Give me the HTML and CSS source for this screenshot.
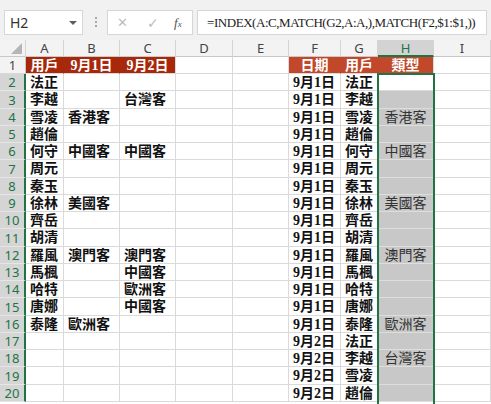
FILE: index.html
```html
<!DOCTYPE html>
<html lang="zh-Hant">
<head>
<meta charset="utf-8">
<title>Sheet</title>
<link rel="stylesheet" href="styles.css">
</head>
<body>
<div class="app">
  <div class="fbar">
    <div class="namebox"><span class="ref">H2</span><span class="dd"></span></div>
    <div class="grip"><i></i><i></i><i></i></div>
    <div class="fnbox"><span class="fx-x">✕</span><span class="fx-ok">✓</span><span class="fx"><i>f</i><span class="sub">x</span></span></div>
    <div class="formula">=INDEX(A:C,MATCH(G2,A:A,),MATCH(F2,$1:$1,))</div>
  </div>
  <div class="sheet">
    <div class="ch corner"><svg width="11" height="11" viewBox="0 0 11 11"><polygon points="11,0 11,11 0,11" fill="#b5b5b5"/></svg></div>
    <div class="ch">A</div><div class="ch">B</div><div class="ch">C</div><div class="ch">D</div><div class="ch">E</div><div class="ch">F</div><div class="ch">G</div><div class="ch sel">H</div><div class="ch">I</div>

    <div class="rh">1</div>
    <div class="c hl">用戶</div><div class="c hl">9月1日</div><div class="c hl end">9月2日</div><div class="c"></div><div class="c"></div>
    <div class="c hr">日期</div><div class="c hr">用戶</div><div class="c hr end">類型</div><div class="c"></div>

    <div class="rh s">2</div>
    <div class="c">法正</div><div class="c"></div><div class="c"></div><div class="c"></div><div class="c"></div>
    <div class="c">9月1日</div><div class="c">法正</div><div class="c act"></div><div class="c"></div>

    <div class="rh s">3</div>
    <div class="c">李越</div><div class="c"></div><div class="c">台灣客</div><div class="c"></div><div class="c"></div>
    <div class="c">9月1日</div><div class="c">李越</div><div class="c g"></div><div class="c"></div>

    <div class="rh s">4</div>
    <div class="c">雪凌</div><div class="c">香港客</div><div class="c"></div><div class="c"></div><div class="c"></div>
    <div class="c">9月1日</div><div class="c">雪凌</div><div class="c g">香港客</div><div class="c"></div>

    <div class="rh s">5</div>
    <div class="c">趙倫</div><div class="c"></div><div class="c"></div><div class="c"></div><div class="c"></div>
    <div class="c">9月1日</div><div class="c">趙倫</div><div class="c g"></div><div class="c"></div>

    <div class="rh s">6</div>
    <div class="c">何守</div><div class="c">中國客</div><div class="c">中國客</div><div class="c"></div><div class="c"></div>
    <div class="c">9月1日</div><div class="c">何守</div><div class="c g">中國客</div><div class="c"></div>

    <div class="rh s">7</div>
    <div class="c">周元</div><div class="c"></div><div class="c"></div><div class="c"></div><div class="c"></div>
    <div class="c">9月1日</div><div class="c">周元</div><div class="c g"></div><div class="c"></div>

    <div class="rh s">8</div>
    <div class="c">秦玉</div><div class="c"></div><div class="c"></div><div class="c"></div><div class="c"></div>
    <div class="c">9月1日</div><div class="c">秦玉</div><div class="c g"></div><div class="c"></div>

    <div class="rh s">9</div>
    <div class="c">徐林</div><div class="c">美國客</div><div class="c"></div><div class="c"></div><div class="c"></div>
    <div class="c">9月1日</div><div class="c">徐林</div><div class="c g">美國客</div><div class="c"></div>

    <div class="rh s">10</div>
    <div class="c">齊岳</div><div class="c"></div><div class="c"></div><div class="c"></div><div class="c"></div>
    <div class="c">9月1日</div><div class="c">齊岳</div><div class="c g"></div><div class="c"></div>

    <div class="rh s">11</div>
    <div class="c">胡清</div><div class="c"></div><div class="c"></div><div class="c"></div><div class="c"></div>
    <div class="c">9月1日</div><div class="c">胡清</div><div class="c g"></div><div class="c"></div>

    <div class="rh s">12</div>
    <div class="c">羅風</div><div class="c">澳門客</div><div class="c">澳門客</div><div class="c"></div><div class="c"></div>
    <div class="c">9月1日</div><div class="c">羅風</div><div class="c g">澳門客</div><div class="c"></div>

    <div class="rh s">13</div>
    <div class="c">馬楓</div><div class="c"></div><div class="c">中國客</div><div class="c"></div><div class="c"></div>
    <div class="c">9月1日</div><div class="c">馬楓</div><div class="c g"></div><div class="c"></div>

    <div class="rh s">14</div>
    <div class="c">哈特</div><div class="c"></div><div class="c">歐洲客</div><div class="c"></div><div class="c"></div>
    <div class="c">9月1日</div><div class="c">哈特</div><div class="c g"></div><div class="c"></div>

    <div class="rh s">15</div>
    <div class="c">唐娜</div><div class="c"></div><div class="c">中國客</div><div class="c"></div><div class="c"></div>
    <div class="c">9月1日</div><div class="c">唐娜</div><div class="c g"></div><div class="c"></div>

    <div class="rh s">16</div>
    <div class="c">泰隆</div><div class="c">歐洲客</div><div class="c"></div><div class="c"></div><div class="c"></div>
    <div class="c">9月1日</div><div class="c">泰隆</div><div class="c g">歐洲客</div><div class="c"></div>

    <div class="rh s">17</div>
    <div class="c"></div><div class="c"></div><div class="c"></div><div class="c"></div><div class="c"></div>
    <div class="c">9月2日</div><div class="c">法正</div><div class="c g"></div><div class="c"></div>

    <div class="rh s">18</div>
    <div class="c"></div><div class="c"></div><div class="c"></div><div class="c"></div><div class="c"></div>
    <div class="c">9月2日</div><div class="c">李越</div><div class="c g">台灣客</div><div class="c"></div>

    <div class="rh s">19</div>
    <div class="c"></div><div class="c"></div><div class="c"></div><div class="c"></div><div class="c"></div>
    <div class="c">9月2日</div><div class="c">雪凌</div><div class="c g"></div><div class="c"></div>

    <div class="rh s">20</div>
    <div class="c"></div><div class="c"></div><div class="c"></div><div class="c"></div><div class="c"></div>
    <div class="c">9月2日</div><div class="c">趙倫</div><div class="c g"></div><div class="c"></div>

    <div class="selection"></div>
  </div>
</div>
</body>
</html>
```

FILE: styles.css
```css
html, body {
  margin: 0;
  padding: 0;
  background: #ffffff;
  overflow: hidden;
}
body {
  width: 491px;
  height: 404px;
}
.app {
  width: 491px;
  height: 404px;
  overflow: hidden;
}

/* formula bar */
.fbar {
  display: flex;
  align-items: flex-start;
  height: 40px;
  box-sizing: border-box;
  padding: 10px 0 0 4px;
  background: #f1f1f1;
}
.namebox {
  width: 79px;
  height: 25px;
  box-sizing: border-box;
  background: #fff;
  border: 1px solid #d6d6d6;
  display: flex;
  align-items: center;
  justify-content: space-between;
  padding: 0 3px 0 5px;
  font: 14px "Noto Sans", sans-serif;
  color: #333;
}
.dd {
  width: 0;
  height: 0;
  border-left: 4px solid transparent;
  border-right: 4px solid transparent;
  border-top: 4px solid #5f5f5f;
  margin-right: 2px;
}
.grip {
  display: flex;
  flex-direction: column;
  gap: 2px;
  margin: 7px 10px 0 12px;
}
.grip i {
  display: block;
  width: 2px;
  height: 2px;
  background: #a8a8a8;
}
.fnbox {
  width: 86px;
  height: 25px;
  box-sizing: border-box;
  background: #fff;
  border: 1px solid #d6d6d6;
  display: flex;
  align-items: center;
  padding-left: 9px;
  font-family: "DejaVu Sans", sans-serif;
  color: #bdbdbd;
}
.fx-x {
  font-size: 13px;
  width: 30px;
}
.fx-ok {
  font-size: 14px;
  width: 27px;
}
.fx {
  font: italic 13px "Liberation Serif", serif;
  color: #505050;
}
.fx .sub {
  font-size: 9px;
}
.formula {
  margin-left: 4px;
  width: 290px;
  height: 25px;
  box-sizing: border-box;
  background: #fff;
  border: 1px solid #d6d6d6;
  padding-left: 9px;
  font: 13px/23px "Liberation Serif", serif;
  letter-spacing: -0.45px;
  color: #222;
  white-space: nowrap;
  overflow: hidden;
}

/* grid */
.sheet {
  position: relative;
  display: grid;
  grid-template-columns: 26px 38px 56px 56px 57px 56px 52px 37px 56px 57px;
  grid-template-rows: 17px repeat(5, 17px 17px 18px 17px);
}
.ch, .rh, .c {
  box-sizing: border-box;
  display: flex;
  align-items: center;
  overflow: hidden;
  white-space: nowrap;
}
.ch {
  justify-content: center;
  background: #f3f3f3;
  border-right: 1px solid #d4d4d4;
  border-bottom: 1px solid #c8c8c8;
  font: 13px "Noto Sans", sans-serif;
  color: #444;
}
.ch.corner {
  justify-content: flex-end;
  align-items: flex-end;
  padding: 0 3px 2px 0;
}
.ch.corner svg {
  display: block;
}
.ch.sel {
  background: #d3d3d3;
  color: #217346;
  border-bottom: 2px solid #217346;
}
.rh {
  justify-content: center;
  background: #f3f3f3;
  border-right: 1px solid #c8c8c8;
  border-bottom: 1px solid #d9d9d9;
  font: 13px "Noto Sans", sans-serif;
  color: #444;
}
.rh.s {
  background: #d5d5d5;
  color: #217346;
  border-right: 2px solid #217346;
  border-bottom-color: #e6e6e6;
}
.c {
  border-right: 1px solid #dadada;
  border-bottom: 1px solid #dadada;
  padding-left: 4px;
  font: 700 14px/17px "Liberation Serif", "Noto Sans CJK TC", serif;
  color: #111;
}
.c.hl, .c.hr {
  justify-content: center;
  padding-left: 0;
  color: #fff;
}
.c.hl {
  background: #a8280c;
  border-right-color: #a8280c;
}
.c.hr {
  background: #c1482a;
  border-right-color: #c1482a;
}
.c.end {
  border-right-color: #dadada;
}
.c.g {
  background: #c8c8c8;
  border-bottom-color: #dedede;
  justify-content: center;
  padding-left: 0;
  font-weight: 400;
  color: #333;
}
.selection {
  position: absolute;
  left: 377px;
  top: 33px;
  width: 58px;
  height: 340px;
  box-sizing: border-box;
  border: 2px solid #217346;
  pointer-events: none;
}
```
